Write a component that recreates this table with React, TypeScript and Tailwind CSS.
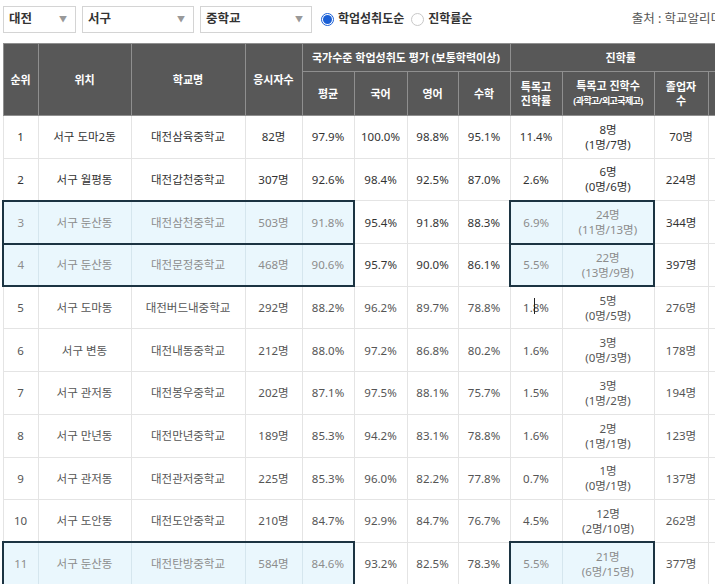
import React from 'react';

type Row = {
  rank: number;
  loc: string;
  school: string;
  takers: string;
  avg: string;
  kor: string;
  eng: string;
  math: string;
  rate: string;
  count: string;
  split: string;
  grads: string;
  hl?: boolean;
};

const rows: Row[] = [
  { rank: 1, loc: '서구 도마2동', school: '대전삼육중학교', takers: '82명', avg: '97.9%', kor: '100.0%', eng: '98.8%', math: '95.1%', rate: '11.4%', count: '8명', split: '(1명/7명)', grads: '70명' },
  { rank: 2, loc: '서구 월평동', school: '대전갑천중학교', takers: '307명', avg: '92.6%', kor: '98.4%', eng: '92.5%', math: '87.0%', rate: '2.6%', count: '6명', split: '(0명/6명)', grads: '224명' },
  { rank: 3, loc: '서구 둔산동', school: '대전삼천중학교', takers: '503명', avg: '91.8%', kor: '95.4%', eng: '91.8%', math: '88.3%', rate: '6.9%', count: '24명', split: '(11명/13명)', grads: '344명', hl: true },
  { rank: 4, loc: '서구 둔산동', school: '대전문정중학교', takers: '468명', avg: '90.6%', kor: '95.7%', eng: '90.0%', math: '86.1%', rate: '5.5%', count: '22명', split: '(13명/9명)', grads: '397명', hl: true },
  { rank: 5, loc: '서구 도마동', school: '대전버드내중학교', takers: '292명', avg: '88.2%', kor: '96.2%', eng: '89.7%', math: '78.8%', rate: '1.8%', count: '5명', split: '(0명/5명)', grads: '276명' },
  { rank: 6, loc: '서구 변동', school: '대전내동중학교', takers: '212명', avg: '88.0%', kor: '97.2%', eng: '86.8%', math: '80.2%', rate: '1.6%', count: '3명', split: '(0명/3명)', grads: '178명' },
  { rank: 7, loc: '서구 관저동', school: '대전봉우중학교', takers: '202명', avg: '87.1%', kor: '97.5%', eng: '88.1%', math: '75.7%', rate: '1.5%', count: '3명', split: '(1명/2명)', grads: '194명' },
  { rank: 8, loc: '서구 만년동', school: '대전만년중학교', takers: '189명', avg: '85.3%', kor: '94.2%', eng: '83.1%', math: '78.8%', rate: '1.6%', count: '2명', split: '(1명/1명)', grads: '123명' },
  { rank: 9, loc: '서구 관저동', school: '대전관저중학교', takers: '225명', avg: '85.3%', kor: '96.0%', eng: '82.2%', math: '77.8%', rate: '0.7%', count: '1명', split: '(0명/1명)', grads: '137명' },
  { rank: 10, loc: '서구 도안동', school: '대전도안중학교', takers: '210명', avg: '84.7%', kor: '92.9%', eng: '84.7%', math: '76.7%', rate: '4.5%', count: '12명', split: '(2명/10명)', grads: '262명' },
  { rank: 11, loc: '서구 둔산동', school: '대전탄방중학교', takers: '584명', avg: '84.6%', kor: '93.2%', eng: '82.5%', math: '78.3%', rate: '5.5%', count: '21명', split: '(6명/15명)', grads: '377명', hl: true }
];

function Select({ label, width }: { label: string; width: string }) {
  return (
    <div className={`${width} h-[27px] border border-[#d4d4d4] bg-white flex items-center justify-between pl-[5px] pr-[8px]`}>
      <span className="text-[12.5px] font-bold text-[#333]">{label}</span>
      <span className="text-[8px] text-[#999]">▼</span>
    </div>
  );
}

function Radio({ checked, label }: { checked?: boolean; label: string }) {
  return (
    <label className="flex items-center gap-[4px]">
      {checked ? (
        <span className="w-[13px] h-[13px] rounded-full border border-[#1a5fd6] flex items-center justify-center">
          <span className="w-[9px] h-[9px] rounded-full bg-[#1a5fd6]" />
        </span>
      ) : (
        <span className="w-[13px] h-[13px] rounded-full border border-[#c8c8c8] bg-white" />
      )}
      <span className="text-[12px] font-bold text-[#333]">{label}</span>
    </label>
  );
}

const th = 'border border-[#8f8f8f] text-white font-bold text-[11px] leading-[14px] text-center align-middle';

export default function App() {
  return (
    <div
      className="w-[715px] h-[584px] overflow-hidden bg-white"
      style={{ fontFamily: '"Noto Sans", "Noto Sans CJK KR", sans-serif' }}
    >
      <div className="flex items-center h-[38px] pl-[3px]">
        <Select label="대전" width="w-[73px]" />
        <div className="w-[6px]" />
        <Select label="서구" width="w-[112px]" />
        <div className="w-[6px]" />
        <Select label="중학교" width="w-[112px]" />
        <div className="flex items-center gap-[7px] ml-[9px]">
          <Radio checked label="학업성취도순" />
          <Radio label="진학률순" />
        </div>
        <span className="ml-auto mr-[-7px] text-[12.5px] text-[#555] whitespace-nowrap">출처 : 학교알리미</span>
      </div>

      <table className="ml-[2px] mt-[5px] border-collapse table-fixed w-[728px] text-[11.5px]">
        <colgroup>
          <col className="w-[35px]" />
          <col className="w-[93px]" />
          <col className="w-[114px]" />
          <col className="w-[57px]" />
          <col className="w-[52px]" />
          <col className="w-[53px]" />
          <col className="w-[51px]" />
          <col className="w-[52px]" />
          <col className="w-[52px]" />
          <col className="w-[92px]" />
          <col className="w-[54px]" />
          <col className="w-[23px]" />
        </colgroup>
        <thead className="bg-[#585858]">
          <tr>
            <th rowSpan={2} className={th}>순위</th>
            <th rowSpan={2} className={th}>위치</th>
            <th rowSpan={2} className={th}>학교명</th>
            <th rowSpan={2} className={th}>응시자수</th>
            <th colSpan={4} className={`${th} h-[28px]`}>국가수준 학업성취도 평가 (보통학력이상)</th>
            <th colSpan={4} className={`${th} h-[28px] border-r-0`}>진학률</th>
          </tr>
          <tr>
            <th className={`${th} h-[44px]`}>평균</th>
            <th className={th}>국어</th>
            <th className={th}>영어</th>
            <th className={th}>수학</th>
            <th className={th}>
              특목고
              <br />
              진학률
            </th>
            <th className={th}>
              특목고 진학수
              <br />
              <span className="text-[9px] tracking-[-0.6px]">(과학고/외고국제고)</span>
            </th>
            <th className={th}>
              졸업자
              <br />수
            </th>
            <th className={`${th} border-r-0`} />
          </tr>
        </thead>
        <tbody>
          {rows.map(r => {
            const base = r.rank <= 4 ? 'text-[#333]' : 'text-[#555]';
            const cell = `border border-[#e4e4e4] text-center align-middle ${base}`;
            const hl = (first?: boolean, last?: boolean) => {
              if (!r.hl) return cell;
              let c = 'border border-[#d5e6ee] bg-[#eaf7fd] text-[#8c8c8c] text-center align-middle border-t-2 border-b-2 border-t-[#1c3442] border-b-[#1c3442]';
              if (first) c += ' border-l-2 border-l-[#1c3442]';
              if (last) c += ' border-r-2 border-r-[#1c3442]';
              return c;
            };
            return (
              <tr key={r.rank} className="h-[42.7px]">
                <td className={hl(true)}>{r.rank}</td>
                <td className={hl()}>{r.loc}</td>
                <td className={hl()}>{r.school}</td>
                <td className={hl()}>{r.takers}</td>
                <td className={hl(false, true)}>{r.avg}</td>
                <td className={cell}>{r.kor}</td>
                <td className={cell}>{r.eng}</td>
                <td className={cell}>{r.math}</td>
                <td className={hl(true)}>
                  {r.rank === 5 ? (
                    <span className="relative">
                      1.8%
                      <span className="absolute left-[11px] top-[-2px] w-px h-[16px] bg-[#222]" />
                    </span>
                  ) : (
                    r.rate
                  )}
                </td>
                <td className={`${hl(false, true)} leading-[15px]`}>
                  {r.count}
                  <br />
                  {r.split}
                </td>
                <td className={cell}>{r.grads}</td>
                <td className="border-t border-b border-l border-[#e4e4e4]" />
              </tr>
            );
          })}
        </tbody>
      </table>
    </div>
  );
}
